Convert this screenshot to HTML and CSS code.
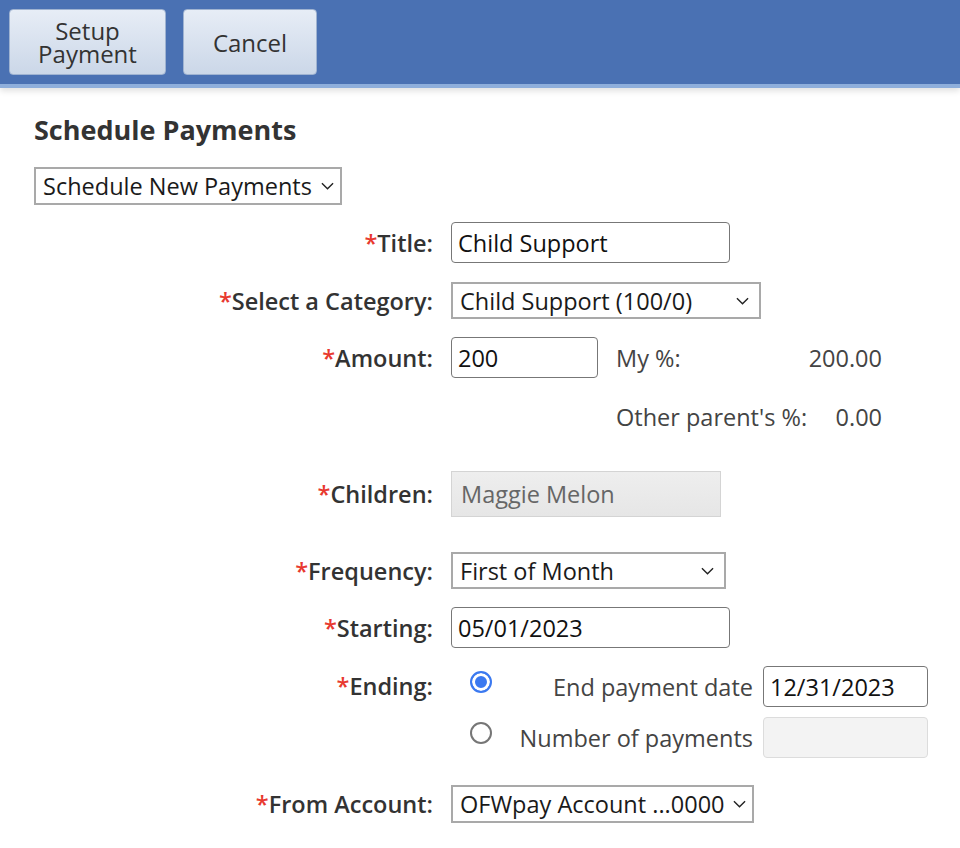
FILE: index.html
```html
<!DOCTYPE html>
<html lang="en">

<head>
    <meta charset="UTF-8">
    <meta name="viewport" content="width=device-width, initial-scale=1.0">
    <title>Schedule Payments</title>
    <link rel="stylesheet" href="styles.css">
</head>

<body>
    <div class="toolbar">
        <button class="toolbar-btn btn-setup">Setup<br>Payment</button>
        <button class="toolbar-btn btn-cancel">Cancel</button>
    </div>

    <div class="page">
        <h2>Schedule Payments</h2>

        <div class="select-wrap select-mode">
            <select>
                <option>Schedule New Payments</option>
            </select>
            <svg class="chevron" viewBox="0 0 14 8"><path d="M1 1l6 6 6-6" /></svg>
        </div>

        <form class="schedule-form">
            <div class="form-row row-title">
                <label><span class="req">*</span>Title:</label>
                <input type="text" class="field field-title" value="Child Support">
            </div>

            <div class="form-row row-category">
                <label><span class="req">*</span>Select a Category:</label>
                <div class="select-wrap select-category">
                    <select>
                        <option>Child Support (100/0)</option>
                    </select>
                    <svg class="chevron" viewBox="0 0 14 8"><path d="M1 1l6 6 6-6" /></svg>
                </div>
            </div>

            <div class="form-row row-amount">
                <label><span class="req">*</span>Amount:</label>
                <input type="text" class="field field-amount" value="200">
                <div class="split">
                    <span class="split-name">My %:</span>
                    <span class="split-value">200.00</span>
                </div>
            </div>

            <div class="form-row row-other">
                <label></label>
                <div class="spacer"></div>
                <div class="split">
                    <span class="split-name">Other parent's %:</span>
                    <span class="split-value">0.00</span>
                </div>
            </div>

            <div class="form-row row-children">
                <label><span class="req">*</span>Children:</label>
                <div class="children-box">Maggie Melon</div>
            </div>

            <div class="form-row row-frequency">
                <label><span class="req">*</span>Frequency:</label>
                <div class="select-wrap select-frequency">
                    <select>
                        <option>First of Month</option>
                    </select>
                    <svg class="chevron" viewBox="0 0 14 8"><path d="M1 1l6 6 6-6" /></svg>
                </div>
            </div>

            <div class="form-row row-starting">
                <label><span class="req">*</span>Starting:</label>
                <input type="text" class="field field-date" value="05/01/2023">
            </div>

            <div class="form-row row-ending">
                <label><span class="req">*</span>Ending:</label>
                <div class="ending">
                    <div class="ending-option">
                        <input type="radio" name="ending" checked>
                        <span class="ending-text">End payment date</span>
                        <input type="text" class="field field-end" value="12/31/2023">
                    </div>
                    <div class="ending-option">
                        <input type="radio" name="ending">
                        <span class="ending-text">Number of payments</span>
                        <input type="text" class="field field-end field-disabled" value="">
                    </div>
                </div>
            </div>

            <div class="form-row row-account">
                <label><span class="req">*</span>From Account:</label>
                <div class="select-wrap select-account">
                    <select>
                        <option>OFWpay Account ...0000</option>
                    </select>
                    <svg class="chevron" viewBox="0 0 14 8"><path d="M1 1l6 6 6-6" /></svg>
                </div>
            </div>
        </form>
    </div>
</body>

</html>
```

FILE: styles.css
```css
body {
    font-family: "Open Sans", "Noto Sans", sans-serif;
    margin: 0;
    padding: 0;
    background-color: #fff;
    color: #333;
}

.toolbar {
    height: 75px;
    background-color: #4a71b3;
    border-bottom: 4px solid #8eaedb;
    box-shadow: 0 3px 6px rgba(0, 0, 0, 0.12);
    display: flex;
    align-items: flex-start;
    gap: 17px;
    padding: 9px 0 0 9px;
}

.toolbar-btn {
    height: 66px;
    background: linear-gradient(#e7edf6, #cbd7e8);
    border: 1px solid #9fb3d1;
    border-radius: 4px;
    font-family: inherit;
    font-size: 24px;
    line-height: 23px;
    color: #333;
    padding: 0;
}

.btn-setup {
    width: 157px;
}

.btn-cancel {
    width: 134px;
}

.page {
    padding: 0 0 0 34px;
}

.page h2 {
    margin: 25px 0 21px;
    font-size: 27px;
    font-weight: 700;
    line-height: 33px;
    color: #333;
}

.select-wrap {
    position: relative;
    display: inline-block;
    flex: none;
}

.select-wrap select {
    appearance: none;
    font-family: inherit;
    font-size: 23.5px;
    color: #1a1a1a;
    background: #fff;
    border: 2px solid #a9a9a9;
    border-radius: 0;
    margin: 0;
    padding: 0 0 0 7px;
    width: 100%;
    height: 100%;
    outline: none;
}

.select-wrap .chevron {
    position: absolute;
    top: 50%;
    right: 12px;
    width: 13px;
    height: 8px;
    margin-top: -4px;
    pointer-events: none;
}

.chevron path {
    fill: none;
    stroke: #222;
    stroke-width: 1.5;
}

.select-mode {
    width: 308px;
    height: 38px;
}

.select-mode .chevron {
    right: 8px;
}

.schedule-form {
    margin-top: 17px;
}

.form-row {
    display: flex;
    align-items: center;
    gap: 18px;
}

.form-row label {
    width: 399px;
    flex: none;
    text-align: right;
    font-size: 23.5px;
    font-weight: 600;
    line-height: 32px;
    color: #333;
}

.req {
    color: #e8392f;
}

.field {
    font-family: inherit;
    font-size: 23.5px;
    color: #111;
    background: #fff;
    border: 1px solid #777;
    border-radius: 4px;
    box-sizing: border-box;
    height: 41px;
    margin: 0;
    padding: 0 6px;
    outline: none;
    flex: none;
}

.field-title,
.field-date {
    width: 279px;
}

.field-amount {
    width: 147px;
}

.spacer {
    width: 147px;
    flex: none;
}

.split {
    display: flex;
    justify-content: space-between;
    width: 266px;
    font-size: 23.5px;
    color: #444;
}

.row-title {
    height: 41px;
    margin-bottom: 19px;
}

.select-category {
    width: 310px;
    height: 37px;
}

.row-category {
    height: 37px;
    margin-bottom: 18px;
}

.row-amount {
    height: 41px;
    margin-bottom: 19px;
}

.row-other {
    height: 40px;
    margin-bottom: 34px;
}

.children-box {
    width: 270px;
    height: 46px;
    box-sizing: border-box;
    padding: 0 9px;
    display: flex;
    align-items: center;
    font-size: 23.5px;
    color: #666;
    background: linear-gradient(#eeeeee, #e6e6e6);
    border: 1px solid #d4d4d4;
}

.row-children {
    height: 46px;
    margin-bottom: 35px;
}

.select-frequency {
    width: 275px;
    height: 37px;
}

.row-frequency {
    height: 37px;
    margin-bottom: 18px;
}

.row-starting {
    height: 41px;
    margin-bottom: 18px;
}

.row-ending {
    align-items: flex-start;
    margin-bottom: 27px;
}

.row-ending label {
    line-height: 41px;
}

.ending {
    width: 477px;
    flex: none;
    display: flex;
    flex-direction: column;
    gap: 10px;
}

.ending-option {
    display: flex;
    align-items: center;
    gap: 10px;
}

.ending-option input[type="radio"] {
    appearance: none;
    width: 22px;
    height: 22px;
    margin: -9px 0 0 19px;
    border: 2px solid #767676;
    border-radius: 50%;
    background: #fff;
    flex: none;
}

.ending-option input[type="radio"]:checked {
    border-color: #3b79f0;
    background: #3b79f0;
    box-shadow: inset 0 0 0 3px #fff;
}

.ending-text {
    flex: 1;
    text-align: right;
    font-size: 23.5px;
    color: #444;
}

.field-end {
    width: 165px;
}

.field-disabled {
    background: #f3f3f3;
    border-color: #dcdcdc;
}

.select-account {
    width: 303px;
    height: 38px;
}

.row-account {
    height: 38px;
}

.select-account .chevron {
    right: 8px;
}
```
